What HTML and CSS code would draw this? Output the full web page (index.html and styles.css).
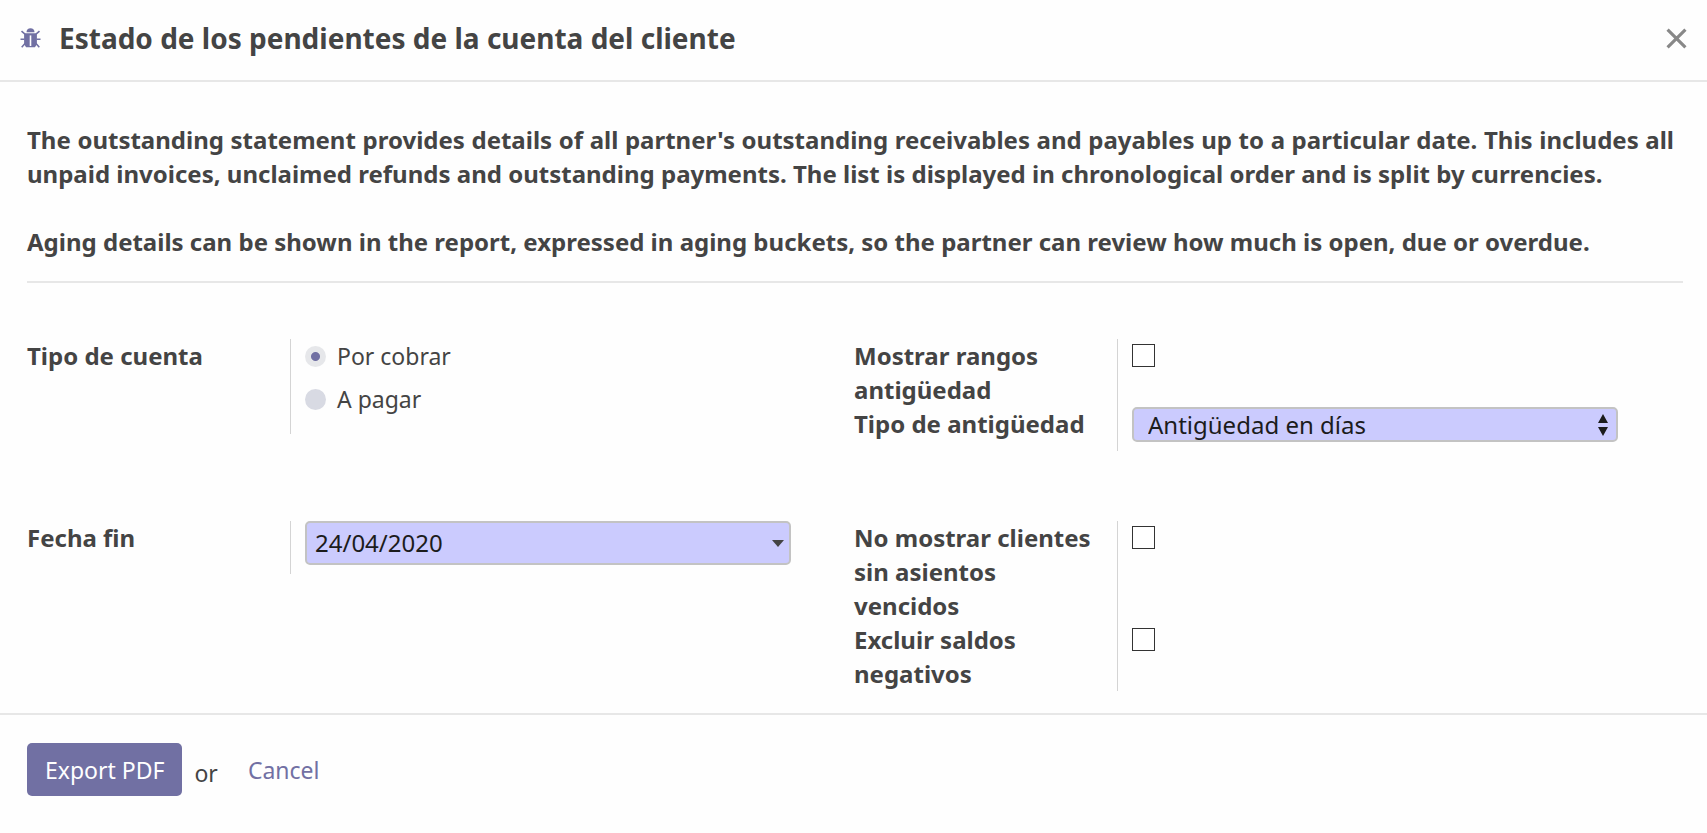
FILE: index.html
```html
<!DOCTYPE html>
<html lang="es">
<head>
    <title>Estado de los pendientes de la cuenta del cliente</title>
    <meta charset="UTF-8">
    <link rel="stylesheet" href="styles.css">
</head>
<body>
    <div class="dialog">
        <div class="dialog-header">
            <svg class="icon-bug" viewBox="0 0 20 20">
                <path d="M6 4.200C6 1.600 7.600 .2 10 .2s4 1.400 4 4z"/>
                <path d="M3.600 5.200h12.800v11l-2 3H5.600l-2-3z"/>
                <path class="legs" d="M4.500 6.200L1 3.200M15.500 6.200L19 3.200M4 11.300H0M16 11.300h4M4.500 15.500L1.200 19.200M15.500 15.500l3.300 3.700"/>
                <path class="split" d="M10 7.400V18"/>
            </svg>
            <h1 class="dialog-title">Estado de los pendientes de la cuenta del cliente</h1>
            <button type="button" class="close" aria-label="Cerrar">
                <svg viewBox="0 0 20 20"><path d="M1.500 1.500l17 17M18.500 1.500l-17 17"/></svg>
            </button>
        </div>
        <form class="dialog-form">
            <div class="dialog-body">
                <div class="help">
                    <p>The outstanding statement provides details of all partner's outstanding receivables and payables up to a particular date. This includes all unpaid invoices, unclaimed refunds and outstanding payments. The list is displayed in chronological order and is split by currencies.</p>
                    <p>Aging details can be shown in the report, expressed in aging buckets, so the partner can review how much is open, due or overdue.</p>
                </div>
                <hr class="separator">
                <div class="groups">
                    <div class="group">
                        <span class="label" id="tipoCuenta">Tipo de cuenta</span>
                        <div class="field radios" role="radiogroup" aria-labelledby="tipoCuenta">
                            <label class="radio"><input type="radio" name="cuenta" value="cobrar" checked>Por cobrar</label>
                            <label class="radio"><input type="radio" name="cuenta" value="pagar">A pagar</label>
                        </div>
                    </div>
                    <div class="group">
                        <label class="label" for="rangos">Mostrar rangos antigüedad</label>
                        <div class="field"><input type="checkbox" class="check" id="rangos"></div>
                        <label class="label" for="tipoAntiguedad">Tipo de antigüedad</label>
                        <div class="field field-select">
                            <div class="control">
                                <select class="input select" id="tipoAntiguedad">
                                    <option>Antigüedad en días</option>
                                    <option>Antigüedad en meses</option>
                                </select>
                                <svg class="arrows" viewBox="0 0 12 22"><path d="M6 0l5 9H1zM6 22l5-9H1z"/></svg>
                            </div>
                        </div>
                    </div>
                    <div class="group">
                        <label class="label" for="fechaFin">Fecha fin</label>
                        <div class="field field-date">
                            <div class="control">
                                <input type="text" class="input date" id="fechaFin" value="24/04/2020">
                                <svg class="caret" viewBox="0 0 12 7"><path d="M0 0h12L6 7z"/></svg>
                            </div>
                        </div>
                    </div>
                    <div class="group">
                        <label class="label" for="sinVencidos">No mostrar clientes sin asientos vencidos</label>
                        <div class="field"><input type="checkbox" class="check" id="sinVencidos"></div>
                        <label class="label" for="negativos">Excluir saldos negativos</label>
                        <div class="field"><input type="checkbox" class="check" id="negativos"></div>
                    </div>
                </div>
            </div>
            <div class="dialog-footer">
                <button type="button" class="btn btn-primary">Export PDF</button>
                <span class="or">or</span>
                <button type="button" class="btn btn-link">Cancel</button>
            </div>
        </form>
    </div>
</body>
</html>
```
FILE: styles.css
```css
body {
    margin: 0;
    font-family: "Noto Sans", sans-serif;
    font-size: 24px;
    line-height: 34px;
    color: #444;
    background-color: #fefefe;
}
button, input, select {
    font: inherit;
    color: inherit;
}

/* Header */
.dialog-header {
    display: flex;
    align-items: center;
    padding: 17px 20px 21px;
    border-bottom: 2px solid #e7e7e7;
}
.icon-bug {
    width: 21px;
    height: 20px;
    margin-right: 18px;
    fill: #7170a3;
}
.icon-bug .legs {
    fill: none;
    stroke: #7170a3;
    stroke-width: 1.6;
}
.icon-bug .split {
    stroke: #fefefe;
    stroke-width: 1.6;
}
.dialog-title {
    flex: 1;
    margin: 0;
    font-size: 28px;
    line-height: 42px;
    font-weight: bold;
}
.close {
    display: flex;
    padding: 0;
    border: 0;
    background: none;
    cursor: pointer;
}
.close svg {
    width: 21px;
    height: 21px;
    stroke: #888;
    stroke-width: 3;
}

/* Body */
.dialog-body {
    padding: 41px 24px 22px 27px;
}
.help {
    padding-right: 9px;
    font-weight: bold;
    text-align: justify;
}
.help p {
    margin: 0 0 34px;
}
.help p:last-child {
    margin-bottom: 0;
}
.separator {
    height: 2px;
    margin: 22px 0 56px;
    border: 0;
    background-color: #e7e7e7;
}
.groups {
    display: grid;
    grid-template-columns: 1fr 1fr;
    row-gap: 70px;
    align-items: start;
    padding-right: 2px;
}
.group {
    display: grid;
    grid-template-columns: 263px 1fr;
}
.label {
    padding-right: 24px;
    font-weight: bold;
}
.field {
    padding: 0 63px 0 14px;
    border-left: 1px solid #d4d4d4;
}
.field-select,
.field-date {
    padding-bottom: 9px;
}
.radios {
    padding-bottom: 18px;
}
.radio {
    display: flex;
    align-items: center;
    gap: 11px;
    margin-bottom: 9px;
    font-size: 23px;
}
.radio:last-child {
    margin-bottom: 0;
}
.radio input {
    appearance: none;
    width: 21px;
    height: 21px;
    margin: 0;
    border-radius: 50%;
    background-color: #d8dae3;
}
.radio input:checked {
    background: radial-gradient(circle, #7170a3 4px, #e6e7ea 5px);
}
.check {
    appearance: none;
    display: block;
    box-sizing: border-box;
    width: 23px;
    height: 23px;
    margin: 5px 0 0;
    border: 1px solid #333;
    background-color: #fff;
}
.control {
    position: relative;
}
.input {
    appearance: none;
    display: block;
    box-sizing: border-box;
    width: 100%;
    border: 2px solid #c3c3c3;
    border-radius: 5px;
    background-color: #cbcbfe;
    color: #1c1c1c;
}
.select {
    height: 35px;
    padding: 0 30px 0 14px;
    line-height: 31px;
}
.date {
    height: 44px;
    padding: 0 30px 2px 8px;
}
.arrows,
.caret {
    position: absolute;
    top: 0;
    bottom: 0;
    margin: auto 0;
    pointer-events: none;
}
.arrows {
    right: 9px;
    width: 12px;
    height: 22px;
    fill: #1c1c1c;
}
.caret {
    right: 7px;
    width: 12px;
    height: 7px;
    fill: #444;
}

/* Footer */
.dialog-footer {
    display: flex;
    align-items: center;
    padding: 28px 27px;
    border-top: 2px solid #e7e7e7;
    font-size: 23px;
}
.btn {
    height: 53px;
    padding: 0 18px;
    border: 0;
    border-radius: 5px;
    cursor: pointer;
}
.btn-primary {
    background-color: #7170a3;
    color: #fff;
}
.btn-link {
    background: none;
    color: #7170a3;
}
.or {
    padding: 6px 12px 0;
}
```
